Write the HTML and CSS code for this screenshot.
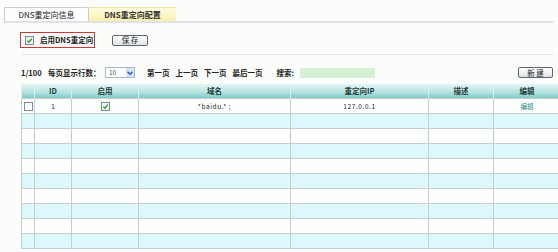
FILE: index.html
```html
<!DOCTYPE html>
<html lang="zh-CN">
<head>
    <meta charset="UTF-8">
    <title>DNS重定向信息</title>
    <link rel="stylesheet" href="styles.css">
</head>
<body>

<div class="tabs">
    <div class="tab active">DNS重定向信息</div>
    <div class="tab other">DNS重定向配置</div>
</div>

<div class="toolbar">
    <label class="enable-box">
        <span class="cb checked"><svg viewBox="0 0 8 8"><path d="M1.5 4.2 L3.3 6 L6.6 2" fill="none" stroke="#2f9a2f" stroke-width="1.4"/></svg></span>
        <span class="enable-text">启用DNS重定向</span>
    </label>
    <button class="btn save">保 存</button>
</div>

<div class="divider"></div>

<div class="pager">
    <span class="page-count">1/100</span>
    <span class="label rows-label">每页显示行数：</span>
    <span class="select">
        <span class="select-val">10</span>
        <span class="select-arrow"><svg viewBox="0 0 8 8"><path d="M1.5 2.8 L4 5.3 L6.5 2.8" fill="none" stroke="#2d5fb4" stroke-width="1.5"/></svg></span>
    </span>
    <span class="label nav first">第一页</span>
    <span class="label nav">上一页</span>
    <span class="label nav">下一页</span>
    <span class="label nav">最后一页</span>
    <span class="label search-label">搜索:</span>
    <span class="search"></span>
    <button class="btn new">新 建</button>
</div>

<table class="grid">
    <thead>
        <tr>
            <th class="c-sel"></th>
            <th class="c-id">ID</th>
            <th class="c-on">启用</th>
            <th class="c-dom">域名</th>
            <th class="c-ip">重定向IP</th>
            <th class="c-desc">描述</th>
            <th class="c-edit">编辑</th>
        </tr>
    </thead>
    <tbody id="rows">
        <tr>
            <td><span class="cb"></span></td>
            <td>1</td>
            <td><span class="cb checked"><svg viewBox="0 0 8 8"><path d="M1.5 4.2 L3.3 6 L6.6 2" fill="none" stroke="#2f9a2f" stroke-width="1.4"/></svg></span></td>
            <td class="mono">*baidu.* ;</td>
            <td class="mono">127.0.0.1</td>
            <td></td>
            <td><a class="edit" href="#">编辑</a></td>
        </tr>
        <tr class="alt"><td></td><td></td><td></td><td></td><td></td><td></td><td></td></tr>
        <tr><td></td><td></td><td></td><td></td><td></td><td></td><td></td></tr>
        <tr class="alt"><td></td><td></td><td></td><td></td><td></td><td></td><td></td></tr>
        <tr><td></td><td></td><td></td><td></td><td></td><td></td><td></td></tr>
        <tr class="alt"><td></td><td></td><td></td><td></td><td></td><td></td><td></td></tr>
        <tr><td></td><td></td><td></td><td></td><td></td><td></td><td></td></tr>
        <tr class="alt"><td></td><td></td><td></td><td></td><td></td><td></td><td></td></tr>
        <tr><td></td><td></td><td></td><td></td><td></td><td></td><td></td></tr>
        <tr class="alt"><td></td><td></td><td></td><td></td><td></td><td></td><td></td></tr>
    </tbody>
</table>

</body>
</html>
```

FILE: styles.css
```css
body {
    margin: 0;
    padding: 0;
    background-color: #fbfdfb;
    color: #222;
    font-family: "Noto Sans CJK SC", "DejaVu Sans", sans-serif;
    font-size: 7.5px;
    line-height: 1;
    white-space: nowrap;
}

.tabs {
    display: flex;
    margin: 7px 4px 0 4px;
    border-bottom: 2px solid #dfe3e7;
}

.tab {
    display: flex;
    align-items: center;
    justify-content: center;
    font-size: 8px;
    color: #222;
    height: 13px;
}

.tab.active {
    width: 83px;
    background-color: #fdfefd;
    border: 1px solid #c9ced2;
    border-bottom: none;
}

.tab.other {
    width: 87px;
    background: linear-gradient(#fffbe0, #fbf2b0);
    border-top: 1px solid #eee3a0;
    font-weight: bold;
    color: #333;
}

.toolbar {
    display: flex;
    align-items: center;
    margin: 9px 0 0 20px;
}

.enable-box {
    display: flex;
    align-items: center;
    width: 69px;
    height: 14px;
    border: 1px solid #c73a3a;
    padding-left: 4px;
    background-color: #fdfefd;
}

.enable-text {
    font-weight: bold;
    margin-left: 6px;
}

.cb {
    display: inline-block;
    width: 7px;
    height: 7px;
    border: 1px solid #7d8b99;
    background-color: #fff;
    vertical-align: middle;
}

.cb.checked {
    background-color: #eef7ee;
}

.cb svg {
    display: block;
    width: 7px;
    height: 7px;
}

.btn {
    font-family: "Noto Sans CJK SC", "DejaVu Sans", sans-serif;
    font-size: 7.5px;
    line-height: 1;
    color: #222;
    background: linear-gradient(#ffffff, #dfe2e6);
    border: 1px solid #5e6670;
    border-radius: 2px;
    padding: 0;
    height: 11px;
    cursor: pointer;
}

.save {
    width: 36px;
    margin-left: 17px;
}

.divider {
    margin: 6px 4px 0 23px;
    border-top: 1px dotted #c9d2d6;
}

.pager {
    display: flex;
    align-items: center;
    margin: 12px 5px 0 21px;
    height: 11px;
}

.page-count {
    font-weight: bold;
    width: 27px;
}

.label {
    font-weight: bold;
}

.rows-label {
    width: 57px;
}

.select {
    display: flex;
    width: 28px;
    height: 9px;
    border: 1px solid #a9b8c8;
    background-color: #fff;
}

.select-val {
    flex: 1;
    padding-left: 3px;
    font-size: 6.5px;
    color: #555;
    display: flex;
    align-items: center;
}

.select-arrow {
    width: 8px;
    background-color: #d6e4f6;
    display: flex;
    align-items: center;
    justify-content: center;
}

.select-arrow svg {
    width: 8px;
    height: 8px;
}

.nav {
    margin-left: 6px;
}

.nav.first {
    margin-left: 12px;
}

.search-label {
    margin-left: 14px;
}

.search {
    width: 75px;
    height: 10px;
    margin-left: 6px;
    background-color: #d5f0d2;
}

.new {
    width: 35px;
    margin-left: auto;
}

.grid {
    margin: 6px 5px 0 21px;
    width: 532px;
    border-collapse: collapse;
    table-layout: fixed;
}

.grid th {
    height: 14px;
    padding: 0;
    font-weight: bold;
    color: #1f3a3a;
    background: linear-gradient(#e6f6f5, #b8e4e1 55%, #7fcbc6);
    border-left: 1px solid #d9efee;
    border-right: 1px solid #d9efee;
}

.grid td {
    height: 14px;
    padding: 0;
    text-align: center;
    border: 1px solid #c6ced3;
    background-color: #fdfffd;
    font-size: 6.5px;
}

.grid tr.alt td {
    background-color: #dcf8fa;
}

.mono {
    letter-spacing: 0.6px;
}

.c-sel { width: 12px; }
.c-id { width: 36px; }
.c-on { width: 66px; }
.c-dom { width: 151px; }
.c-ip { width: 137px; }
.c-desc { width: 64px; }
.c-edit { width: 66px; }

.edit {
    color: #2f8a86;
    text-decoration: none;
}
```
